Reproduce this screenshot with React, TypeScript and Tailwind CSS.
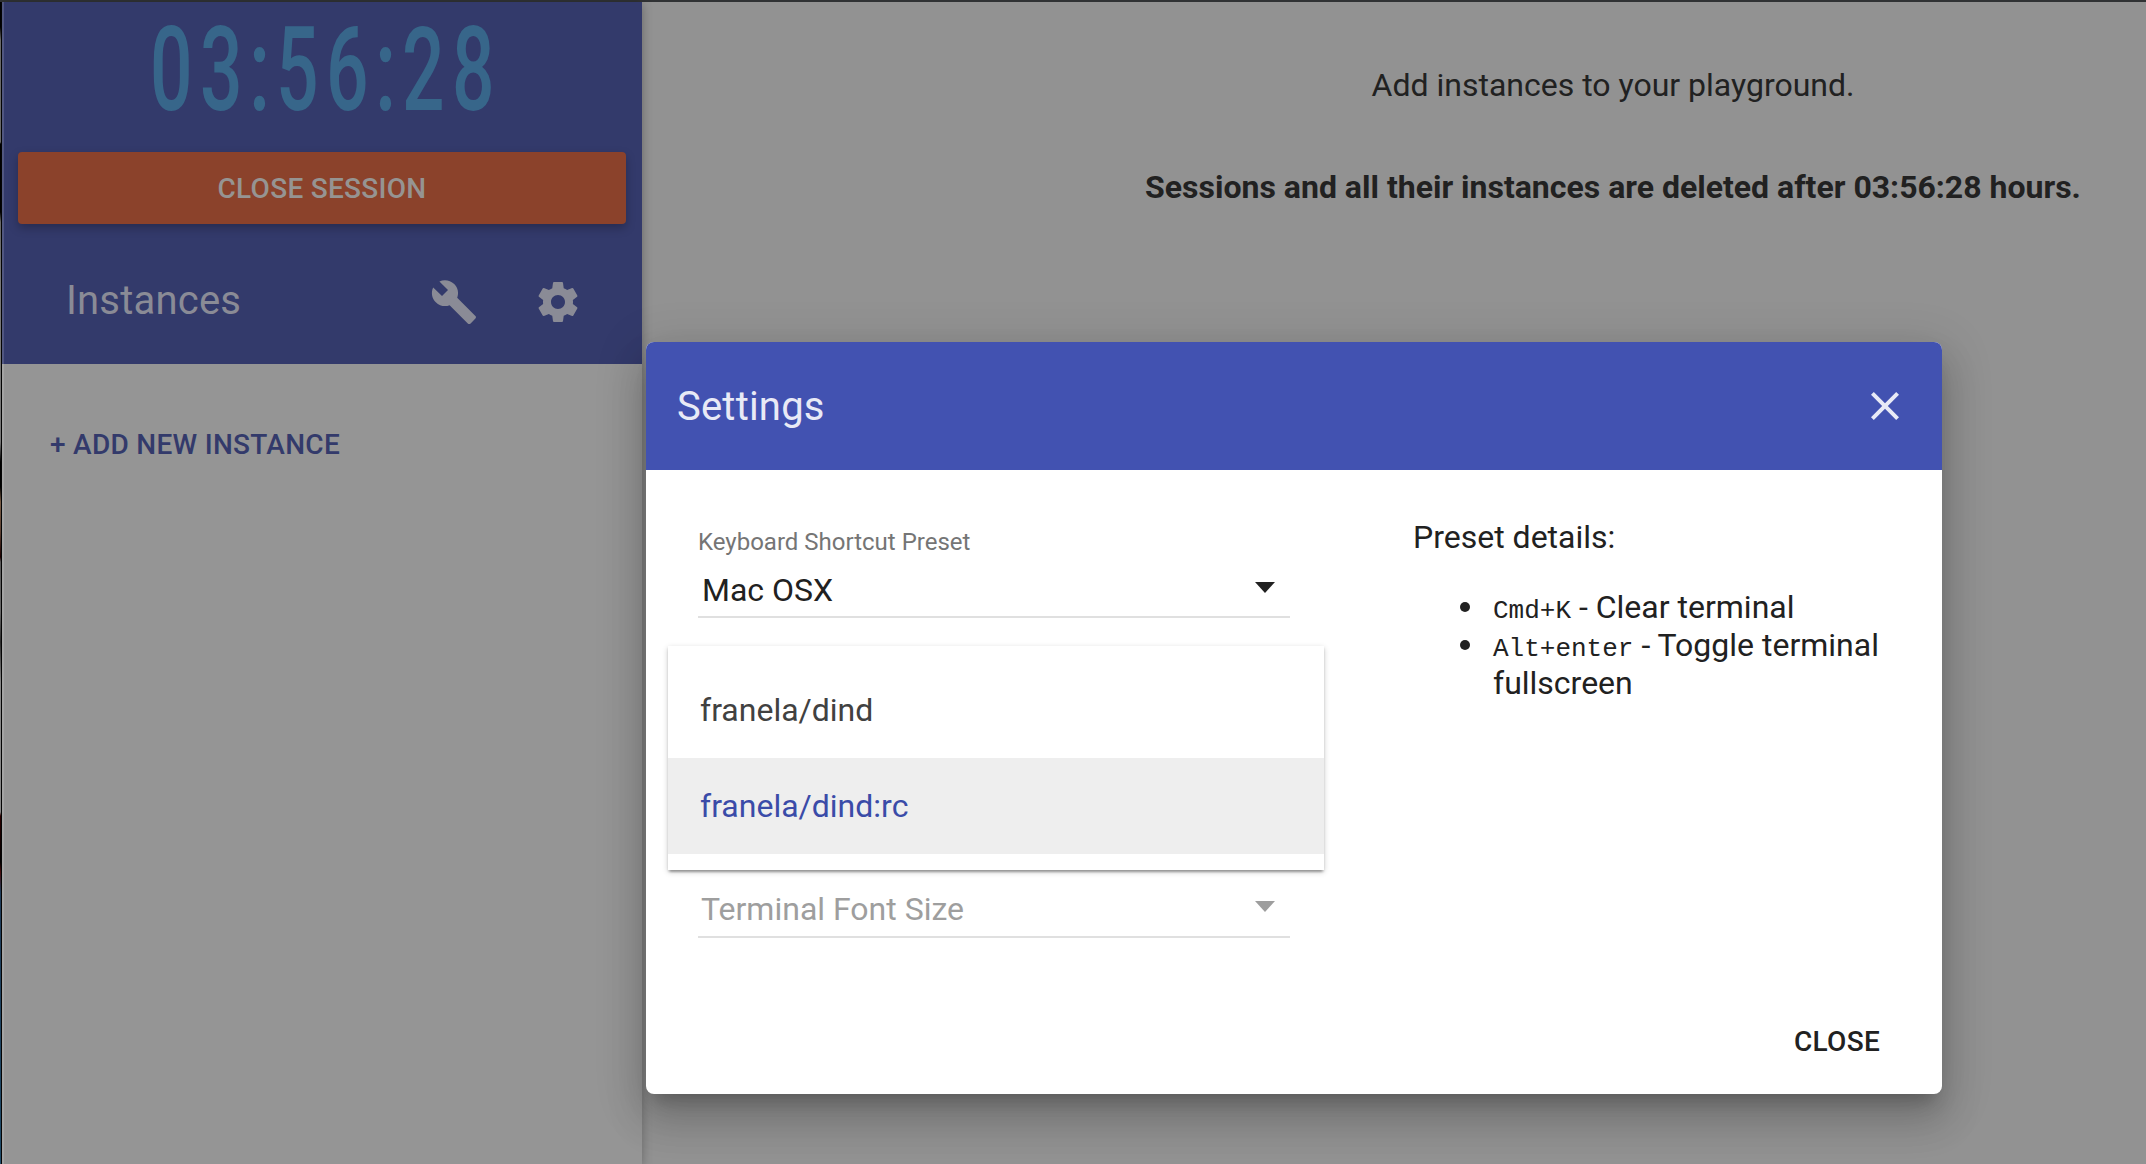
import React from "react";

const TIMER = "03:56:28";

function Timer() {
  return (
    <div className="mt-[15px] ml-[3px] flex h-[106px] w-[356px] self-center text-[117px] leading-[106px] font-medium text-[#37668a]">
      {TIMER.split("").map((c, i) => (
        <span
          key={i}
          className={
            c === ":"
              ? "flex w-[25px] shrink-0 justify-center"
              : "flex w-[50.5px] shrink-0 justify-center"
          }
        >
          <span className={c === ":" ? "block scale-x-[0.7]" : "block scale-x-[0.64]"}>{c}</span>
        </span>
      ))}
    </div>
  );
}

function Icon({ d, className }: { d: string; className: string }) {
  return (
    <svg viewBox="0 0 24 24" className={`size-12 shrink-0 ${className}`} fill="currentColor">
      <path d={d} />
    </svg>
  );
}

const BUILD =
  "M22.7 19l-9.1-9.1c.9-2.3.4-5-1.5-6.9-2-2-5-2.4-7.4-1.3L9 6 6 9 1.6 4.7C.4 7.1.9 10.1 2.9 12.1c1.9 1.9 4.6 2.4 6.9 1.5l9.1 9.1c.4.4 1 .4 1.4 0l2.3-2.3c.5-.4.5-1.1.1-1.4z";
const GEAR =
  "M19.43 12.98c.04-.32.07-.64.07-.98s-.03-.66-.07-.98l2.11-1.65c.19-.15.24-.42.12-.64l-2-3.46c-.12-.22-.39-.3-.61-.22l-2.49 1c-.52-.4-1.08-.73-1.69-.98l-.38-2.65C14.46 2.18 14.25 2 14 2h-4c-.25 0-.46.18-.49.42l-.38 2.65c-.61.25-1.17.59-1.69.98l-2.49-1c-.23-.09-.49 0-.61.22l-2 3.46c-.13.22-.07.49.12.64l2.11 1.65c-.04.32-.07.65-.07.98s.03.66.07.98l-2.11 1.65c-.19.15-.24.42-.12.64l2 3.46c.12.22.39.3.61.22l2.49-1c.52.4 1.08.73 1.69.98l.38 2.65c.03.24.24.42.49.42h4c.25 0 .46-.18.49-.42l.38-2.65c.61-.25 1.17-.59 1.69-.98l2.49 1c.23.09.49 0 .61-.22l2-3.46c.12-.22.07-.49-.12-.64l-2.11-1.65zM12 15.5c-1.93 0-3.5-1.57-3.5-3.5s1.57-3.5 3.5-3.5 3.5 1.57 3.5 3.5-1.57 3.5-3.5 3.5z";
const CLOSE =
  "M19 6.41l-1.41-1.41-5.59 5.59-5.59-5.59-1.41 1.41 5.59 5.59-5.59 5.59 1.41 1.41 5.59-5.59 5.59 5.59 1.41-1.41-5.59-5.59z";

function Sidebar() {
  return (
    <aside className="relative z-10 flex w-[640px] shrink-0 flex-col bg-[#959595] shadow-[0_2px_10px_rgba(0,0,0,0.3)]">
      <header className="flex h-[362px] flex-col bg-[#333a6b]">
        <Timer />
        <button className="mx-4 mt-[29px] h-[72px] shrink-0 rounded-[4px] bg-[#8b422b] pt-px text-[28px] leading-[72px] font-medium tracking-[0.28px] text-[#969492] shadow-[0_4px_10px_rgba(0,0,0,0.26)]">
          CLOSE SESSION
        </button>
        <div className="mt-[14px] flex h-[128px] items-center pl-[64px] text-[#8a8b96]">
          <h2 className="w-[364px] text-[40px] tracking-[0.2px]">Instances</h2>
          <Icon d={BUILD} className="mt-px" />
          <Icon d={GEAR} className="mt-px ml-14" />
        </div>
      </header>
      <button className="mt-[45px] ml-[48px] self-start text-[28px] leading-[72px] font-medium tracking-[0.28px] text-[#333a6b]">
        + ADD NEW INSTANCE
      </button>
    </aside>
  );
}

function Arrow() {
  return (
    <span className="mr-[15px] mb-[5px] h-0 w-0 border-x-[10.5px] border-t-[11px] border-x-transparent border-t-current" />
  );
}

function Shortcut({ keys, action }: { keys: string; action: string }) {
  return (
    <li className="flex">
      <span className="mt-[14px] mr-[23px] size-[10px] shrink-0 rounded-full bg-[#212121]" />
      <span>
        <code className="font-['Liberation_Mono',monospace] text-[26px] leading-none">{keys}</code> - {action}
      </span>
    </li>
  );
}

function SettingsDialog() {
  return (
    <section className="absolute top-[340px] left-[646px] z-20 flex h-[752px] w-[1296px] flex-col rounded-lg bg-white text-[#212121] shadow-[0_14px_16px_-8px_rgba(0,0,0,0.2),0_26px_38px_4px_rgba(0,0,0,0.14),0_10px_48px_8px_rgba(0,0,0,0.12)]">
      <header className="flex h-32 shrink-0 items-center justify-between rounded-t-lg bg-[#4252b1] pr-[33px] pl-[31px] text-[#e8eaf6]">
        <h2 className="pt-px text-[40px] tracking-[0.2px]">Settings</h2>
        <Icon d={CLOSE} className="" />
      </header>
      <div className="flex">
        <div className="flex w-[768px] flex-col pl-[52px]">
          <label className="mt-[56px] text-2xl leading-8 text-[#757575]">Keyboard Shortcut Preset</label>
          <div className="flex h-[60px] w-[592px] items-center justify-between border-b-2 border-[#e0e0e0] pt-[6px] pl-1 text-[32px]">
            <span>Mac OSX</span>
            <Arrow />
          </div>
          <div className="mt-[264px] flex h-[56px] w-[592px] items-center justify-between border-b-2 border-[#e0e0e0] pl-[3px] text-[32px] text-[#9e9e9e]">
            <span>Terminal Font Size</span>
            <Arrow />
          </div>
        </div>
        <div className="w-[480px] pt-12 text-[32px] leading-[38px]">
          <p className="-ml-px">Preset details:</p>
          <ul className="mt-8 pl-[46px]">
            <Shortcut keys="Cmd+K" action="Clear terminal" />
            <Shortcut keys="Alt+enter" action="Toggle terminal fullscreen" />
          </ul>
        </div>
      </div>
      <button className="mt-auto mr-[62px] mb-[16px] self-end text-[28px] leading-[72px] font-medium tracking-[0.28px]">
        CLOSE
      </button>
      <div className="absolute top-[304px] left-[22px] h-[224px] w-[656px] bg-white py-4 text-[32px] leading-[96px] shadow-[0_2px_6px_rgba(0,0,0,0.2),0_2px_2px_rgba(0,0,0,0.14),0_4px_2px_-2px_rgba(0,0,0,0.2)]">
        <div className="h-24 pl-8 text-[#414141]">franela/dind</div>
        <div className="h-24 bg-[#eeeeee] pl-8 text-[#3a4ba8]">franela/dind:rc</div>
      </div>
    </section>
  );
}

export default function App() {
  return (
    <div className="flex h-[1164px] w-[2146px] flex-col overflow-hidden bg-[#929292] font-['Roboto',sans-serif]">
      <div className="h-[2px] shrink-0 bg-[#303234]" />
      <div className="relative flex grow">
        <div className="w-px shrink-0 bg-[linear-gradient(#000_0,#000_25px,#777_38px,#777_140px,#000_142px,#000_210px,#777_220px,#888_280px,#888_440px,#000_460px,#000_485px,#8a6a50_500px,#6a4a3a_530px,#200_555px,#666_560px,#777_610px,#333_640px,#999_680px,#999_810px,#300_814px,#000_860px,#511_870px,#246_890px,#257_1162px)]" />
        <div className="w-px shrink-0 bg-[#050505]" />
        <Sidebar />
        <div className="absolute top-0 left-[2px] z-10 h-[1162px] w-[2px] bg-white/15" />
        <main className="flex w-[1942px] shrink-0 flex-col items-center text-[32px] leading-[38px] text-[#212121]">
          <p className="mt-[64px]">Add instances to your playground.</p>
          <p className="mt-[64px] font-bold">
            Sessions and all their instances are deleted after {TIMER} hours.
          </p>
        </main>
        <SettingsDialog />
      </div>
    </div>
  );
}
